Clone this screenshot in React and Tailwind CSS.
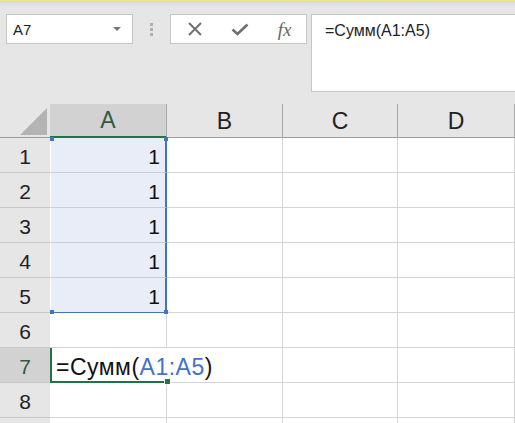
import React from 'react';

const font = { fontFamily: '"Liberation Sans", Arial, sans-serif' };

const cols = [
  { name: 'A', w: 'w-[117px]' },
  { name: 'B', w: 'w-[116px]' },
  { name: 'C', w: 'w-[115px]' },
  { name: 'D', w: 'w-[117px]' },
];

const rows = [1, 2, 3, 4, 5, 6, 7, 8, 9];

const Corner = ({ className }) => (
  <div className={`absolute w-[4px] h-[4px] bg-[#4472c4] ${className}`} />
);

const RowHeader = ({ n }) => {
  const active = n === 7;
  return (
    <div
      className={`w-[50px] h-[35px] shrink-0 flex items-center justify-center pt-[3px] border-b border-[#c8c8c8] text-[21px] leading-none ${
        active ? 'bg-[#d2d2d2] text-[#2d5b44]' : 'bg-[#e6e6e6] text-[#222]'
      }`}
    >
      {/* row 9 lies below the window edge */}
      {n < 9 ? n : null}
    </div>
  );
};

const CellA = ({ n }) => {
  if (n <= 5) {
    return (
      <div
        className={`relative w-[117px] h-[35px] shrink-0 flex items-center justify-end pr-[5px] pt-[3px] bg-[#e8edf7] border-l border-l-white border-r-2 border-r-[#4472c4] ${
          n === 5 ? 'border-b border-b-[#4472c4]' : 'border-b border-b-[#c9ccd3]'
        } text-[21px] leading-none text-[#111]`}
      >
        1
        {n === 1 && <Corner className="-left-[1px] -top-[1px]" />}
        {n === 1 && <Corner className="-right-[3px] -top-[1px]" />}
        {n === 5 && <Corner className="-left-[1px] -bottom-[2px]" />}
        {n === 5 && <Corner className="-right-[3px] -bottom-[2px]" />}
      </div>
    );
  }
  if (n === 7) {
    return (
      <div className="relative w-[117px] h-[35px] shrink-0 flex items-center pl-[4px] pt-[5px] border-l-2 border-b-2 border-[#217346] bg-white text-[23px] leading-none text-[#111] whitespace-nowrap tracking-[0.5px]">
        <span>
          =Сумм(<span className="text-[#4472c4]">A1:A5</span>)
        </span>
        <div className="absolute -right-[3px] -bottom-[3px] w-[5px] h-[5px] bg-[#217346] outline outline-1 outline-white" />
      </div>
    );
  }
  return <div className="w-[117px] h-[35px] shrink-0 bg-white border-r border-b border-[#d4d4d4]" />;
};

export default function App() {
  return (
    <div className="w-[515px] h-[423px] overflow-hidden bg-[#e6e6e6]" style={font}>
      {/* toolbar */}
      <div className="h-[104px] border-t border-[#f1e68e] bg-gradient-to-b from-[#d8d8d8] to-[#e6e6e6] to-[6px] flex items-start pt-[13px]">
        <div className="ml-[6px] w-[127px] h-[30px] bg-white border border-[#c6c6c6] flex items-center justify-between pl-[6px] pr-[11px]">
          <span className="text-[15px] leading-none text-[#222]">A7</span>
          <span className="w-0 h-0 border-l-[4px] border-r-[4px] border-t-[4px] border-l-transparent border-r-transparent border-t-[#777]" />
        </div>
        <div className="w-[37px] h-[30px] flex flex-col items-center justify-center gap-[2px]">
          <div className="w-[3px] h-[3px] bg-[#b0b0b0]" />
          <div className="w-[3px] h-[3px] bg-[#b0b0b0]" />
          <div className="w-[3px] h-[3px] bg-[#b0b0b0]" />
        </div>
        <div className="w-[137px] h-[30px] bg-white border border-[#c6c6c6] flex items-center">
          <div className="w-[46px] flex justify-center pl-[2px]">
            <svg width="14" height="14" viewBox="0 0 14 14">
              <path d="M1 1 L13 13 M13 1 L1 13" stroke="#707070" strokeWidth="2" fill="none" />
            </svg>
          </div>
          <div className="w-[44px] flex justify-center pl-[2px]">
            <svg width="18" height="13" viewBox="0 0 18 13">
              <path d="M1.5 6.5 L6.5 11 L16.5 1.5" stroke="#707070" strokeWidth="2.6" fill="none" />
            </svg>
          </div>
          <div className="w-[45px] flex justify-center pt-[1px] pl-[2px]">
            <span
              className="italic text-[19px] leading-none text-[#666]"
              style={{ fontFamily: '"Liberation Serif", "Times New Roman", serif' }}
            >
              fx
            </span>
          </div>
        </div>
        <div className="ml-[4px] flex-1 h-[78px] bg-white border border-r-0 border-[#c6c6c6] pl-[13px] pt-[8px] text-[16px] leading-none text-[#222]">
          =Сумм(A1:A5)
        </div>
      </div>

      {/* column headers */}
      <div className="flex h-[34px]">
        <div className="w-[50px] shrink-0 relative border-b border-[#9b9b9b] bg-[#e6e6e6]">
          <svg className="absolute left-[20px] top-[4px]" width="27" height="27" viewBox="0 0 27 27">
            <path d="M27 0 L27 27 L0 27 Z" fill="#b4b4b4" />
          </svg>
        </div>
        {cols.map((c) =>
          c.name === 'A' ? (
            <div
              key={c.name}
              className={`${c.w} shrink-0 flex items-center justify-center pt-[1px] bg-[#d2d2d2] border-r border-r-[#ababab] border-b-2 border-b-[#217346] text-[23px] leading-none text-[#2d5b44]`}
            >
              {c.name}
            </div>
          ) : (
            <div
              key={c.name}
              className={`${c.w} shrink-0 flex items-center justify-center pt-[1px] bg-[#e6e6e6] border-r border-[#ababab] border-b border-b-[#9b9b9b] text-[23px] leading-none text-[#222]`}
            >
              {c.name}
            </div>
          )
        )}
      </div>

      {/* rows */}
      {rows.map((n) => (
        <div key={n} className="flex">
          <RowHeader n={n} />
          <CellA n={n} />
          <div className="w-[116px] h-[35px] shrink-0 bg-white border-r border-b border-[#d4d4d4]" />
          <div className="w-[115px] h-[35px] shrink-0 bg-white border-r border-b border-[#d4d4d4]" />
          <div className="w-[117px] h-[35px] shrink-0 bg-white border-r border-b border-[#d4d4d4]" />
        </div>
      ))}
    </div>
  );
}
